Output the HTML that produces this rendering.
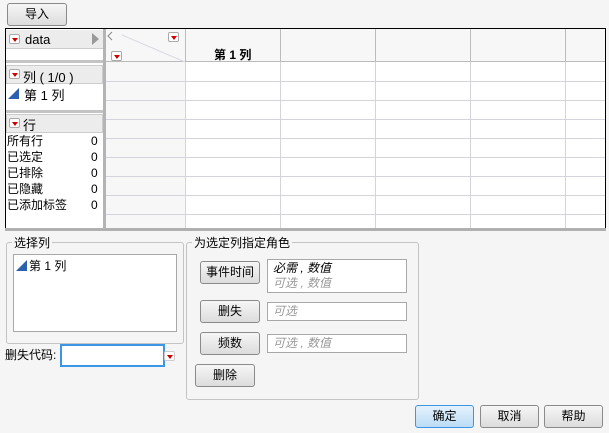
<!DOCTYPE html><html><head><meta charset="utf-8"><style>
*{box-sizing:border-box;margin:0;padding:0}
body{width:609px;height:433px;background:#f5f5f5;position:relative;overflow:hidden;font-family:"Liberation Sans","Noto Sans CJK SC",sans-serif;font-size:12px;color:#000}
.a{position:absolute}
.btn{position:absolute;border:1px solid #8a8a8a;border-radius:3px;background:linear-gradient(#f6f6f6,#dcdcdc);text-align:center;font-size:12px}
.tri{position:absolute;width:11px;height:10px;border:1px solid #aaa;background:#fff;border-radius:2px}
.tri:after{content:"";position:absolute;left:2px;top:3px;border-left:3px solid transparent;border-right:3px solid transparent;border-top:4px solid #c00}
.hl{position:absolute;height:1px;background:#d4d4dc}
.vl{position:absolute;width:1px;background:#d4d4dc}
.fld{position:absolute;border:1px solid #a8a8a8;background:#fff;font-style:italic;color:#999;padding-left:5px;font-size:12px}
.ramp{position:absolute;width:0;height:0;border-left:11px solid transparent;border-bottom:11px solid #2d5fb0}
</style></head><body>
<div class="btn" style="left:7px;top:3px;width:60px;height:23px;line-height:21px">导入</div>
<!-- table -->
<div class="a" style="left:5px;top:28px;width:601px;height:202px;border:1px solid #000;border-bottom:none;background:#fff"></div>
<div class="a" style="left:5px;top:228px;width:601px;height:3px;background:#b0b0b0"></div>
<!-- left panel -->
<div class="a" style="left:6px;top:29px;width:97px;height:199px;background:#fff"></div>
<div class="a" style="left:103px;top:29px;width:3px;height:199px;background:#b4b4b4"></div>
<div class="a" style="left:6px;top:30px;width:97px;height:19px;background:#ececec;border-bottom:1px solid #ccc"></div>
<div class="tri" style="left:9px;top:34px"></div>
<div class="a" style="left:25px;top:32px;font-size:13px">data</div>
<div class="a" style="left:92px;top:33px;width:0;height:0;border-top:6px solid transparent;border-bottom:6px solid transparent;border-left:7px solid #999"></div>
<div class="a" style="left:6px;top:60px;width:97px;height:3px;background:#c4c4c4"></div>
<div class="a" style="left:6px;top:65px;width:97px;height:19px;background:#ececec;border:1px solid #ccc"></div>
<div class="tri" style="left:9px;top:69px"></div>
<div class="a" style="left:23px;top:67px;font-size:13px">列 ( 1/0 )</div>
<div class="ramp" style="left:8px;top:88px"></div>
<div class="a" style="left:24px;top:85px;font-size:13px">第 1 列</div>
<div class="a" style="left:6px;top:110px;width:97px;height:3px;background:#c4c4c4"></div>
<div class="a" style="left:6px;top:114px;width:97px;height:19px;background:#ececec;border:1px solid #ccc"></div>
<div class="tri" style="left:9px;top:118px"></div>
<div class="a" style="left:23px;top:115px;font-size:13px">行</div>
<div class="a" style="left:7px;top:133px;line-height:16px;font-size:12px">所有行<br>已选定<br>已排除<br>已隐藏<br>已添加标签</div>
<div class="a" style="left:91px;top:133px;line-height:16px;font-size:12px">0<br>0<br>0<br>0<br>0</div>
<!-- grid -->
<div class="a" style="left:106px;top:29px;width:499px;height:33px;background:#f7f7f7"></div>
<div class="a" style="left:106px;top:62px;width:79px;height:166px;background:#f7f7f7"></div>
<div class="a" style="left:106px;top:61px;width:499px;height:1px;background:#bbb"></div>
<div class="a" style="left:185px;top:29px;width:1px;height:33px;background:#bbb"></div>
<div class="a" style="left:280px;top:29px;width:1px;height:33px;background:#bbb"></div>
<div class="a" style="left:375px;top:29px;width:1px;height:33px;background:#bbb"></div>
<div class="a" style="left:470px;top:29px;width:1px;height:33px;background:#bbb"></div>
<div class="a" style="left:565px;top:29px;width:1px;height:33px;background:#bbb"></div>
<div class="vl" style="left:185px;top:62px;height:166px"></div>
<div class="vl" style="left:280px;top:62px;height:166px"></div>
<div class="vl" style="left:375px;top:62px;height:166px"></div>
<div class="vl" style="left:470px;top:62px;height:166px"></div>
<div class="vl" style="left:565px;top:62px;height:166px"></div>
<div class="hl" style="left:106px;top:81px;width:499px"></div>
<div class="hl" style="left:106px;top:100px;width:499px"></div>
<div class="hl" style="left:106px;top:119px;width:499px"></div>
<div class="hl" style="left:106px;top:138px;width:499px"></div>
<div class="hl" style="left:106px;top:157px;width:499px"></div>
<div class="hl" style="left:106px;top:176px;width:499px"></div>
<div class="hl" style="left:106px;top:195px;width:499px"></div>
<div class="hl" style="left:106px;top:214px;width:499px"></div>
<svg class="a" style="left:106px;top:29px" width="80" height="33"><path d="M6 3 L2 7 L6 11" fill="none" stroke="#888"/><line x1="16" y1="6" x2="79" y2="33" stroke="#d8d8e0"/></svg>
<div class="tri" style="left:168px;top:32px"></div>
<div class="tri" style="left:111px;top:51px"></div>
<div class="a" style="left:214px;top:46px;font-weight:bold;font-size:12px">第 1 列</div>
<!-- select columns -->
<div class="a" style="left:6px;top:242px;width:178px;height:102px;border:1px solid #c4c4c4;border-radius:3px"></div>
<div class="a" style="left:12px;top:234px;background:#f5f5f5;padding:0 2px;font-size:12px">选择列</div>
<div class="a" style="left:13px;top:254px;width:164px;height:78px;border:1px solid #a8a8a8;background:#fff"></div>
<div class="ramp" style="left:16px;top:260px"></div>
<div class="a" style="left:29px;top:257px;font-size:12px">第 1 列</div>
<div class="a" style="left:5px;top:346px;font-size:12px">删失代码:</div>
<div class="a" style="left:60px;top:344px;width:105px;height:23px;border:2px solid #3c96e6;background:#fff"></div>
<div class="tri" style="left:164px;top:351px;border-color:#ccc"></div>
<!-- roles -->
<div class="a" style="left:186px;top:242px;width:233px;height:158px;border:1px solid #c4c4c4;border-radius:3px"></div>
<div class="a" style="left:192px;top:234px;background:#f5f5f5;padding:0 2px;font-size:12px">为选定列指定角色</div>
<div class="btn" style="left:200px;top:261px;width:60px;height:23px;line-height:21px">事件时间</div>
<div class="fld" style="left:267px;top:259px;width:140px;height:34px;line-height:15px;padding-top:1px"><span style="color:#000">必需 , 数值</span><br>可选 , 数值</div>
<div class="btn" style="left:200px;top:300px;width:60px;height:23px;line-height:21px">删失</div>
<div class="fld" style="left:267px;top:302px;width:140px;height:19px;line-height:17px">可选</div>
<div class="btn" style="left:200px;top:332px;width:60px;height:23px;line-height:21px">频数</div>
<div class="fld" style="left:267px;top:334px;width:140px;height:19px;line-height:17px">可选 , 数值</div>
<div class="btn" style="left:195px;top:364px;width:60px;height:23px;line-height:21px">删除</div>
<!-- bottom buttons -->
<div class="btn" style="left:415px;top:405px;width:59px;height:23px;line-height:21px;border-color:#3c96e6;background:linear-gradient(#e4f2fd,#bcdcf6)">确定</div>
<div class="btn" style="left:480px;top:405px;width:59px;height:23px;line-height:21px">取消</div>
<div class="btn" style="left:544px;top:405px;width:59px;height:23px;line-height:21px">帮助</div>
</body></html>
